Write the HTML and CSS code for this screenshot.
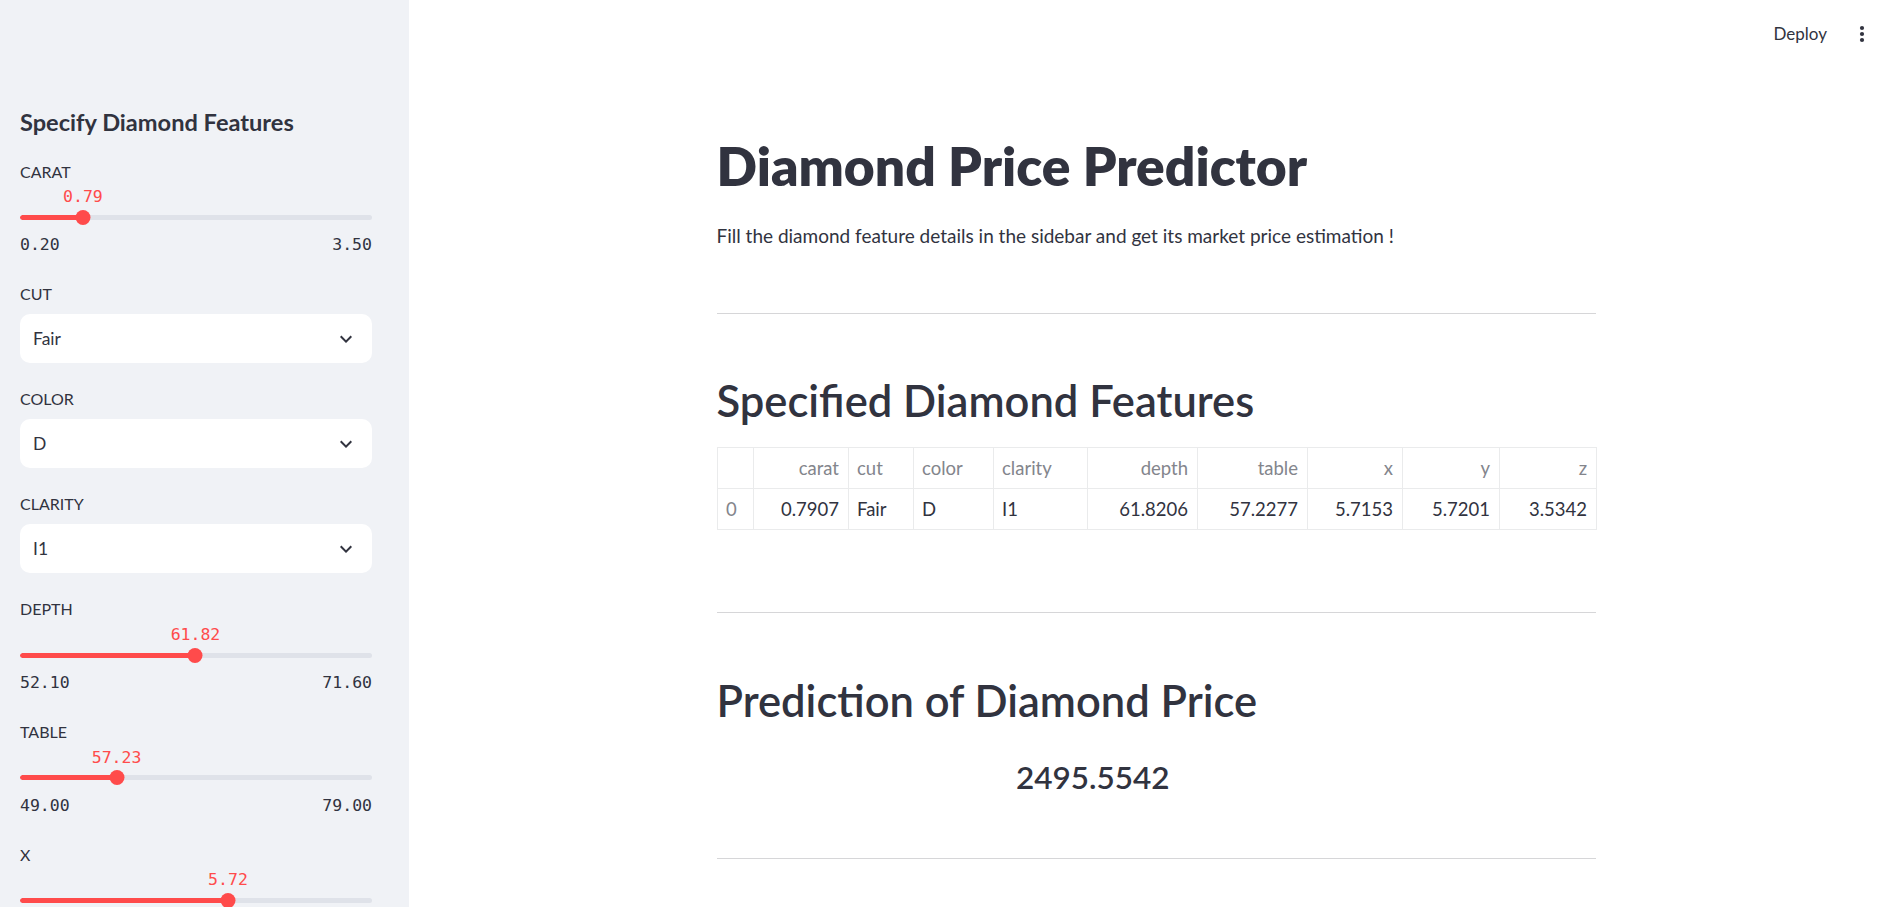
FILE: index.html
```html
<!DOCTYPE html>
<html lang="en">
<head>
<meta charset="utf-8">
<title>Diamond Price Predictor</title>
<link rel="stylesheet" href="styles.css">
</head>
<body>
<div class="app">
  <aside class="sidebar">
    <h2 class="sidebar-title">Specify Diamond Features</h2>
    <div class="widgets">
      <div class="slider">
        <div class="label">CARAT</div>
        <div class="slider-rail">
          <div class="track"><div class="track-fill" style="width:17.88%"></div></div>
          <div class="thumb" style="left:17.88%"></div>
          <div class="thumb-value" style="left:17.88%">0.79</div>
        </div>
        <div class="minmax"><span>0.20</span><span>3.50</span></div>
      </div>

      <div class="select-widget">
        <div class="label">CUT</div>
        <div class="select"><span>Fair</span>
          <svg class="chev" viewBox="0 0 24 24" width="24" height="24"><path d="M7.41 8.59L12 13.17l4.59-4.58L18 10l-6 6-6-6 1.41-1.41z"/></svg>
        </div>
      </div>

      <div class="select-widget">
        <div class="label">COLOR</div>
        <div class="select"><span>D</span>
          <svg class="chev" viewBox="0 0 24 24" width="24" height="24"><path d="M7.41 8.59L12 13.17l4.59-4.58L18 10l-6 6-6-6 1.41-1.41z"/></svg>
        </div>
      </div>

      <div class="select-widget">
        <div class="label">CLARITY</div>
        <div class="select"><span>I1</span>
          <svg class="chev" viewBox="0 0 24 24" width="24" height="24"><path d="M7.41 8.59L12 13.17l4.59-4.58L18 10l-6 6-6-6 1.41-1.41z"/></svg>
        </div>
      </div>

      <div class="slider">
        <div class="label">DEPTH</div>
        <div class="slider-rail">
          <div class="track"><div class="track-fill" style="width:49.85%"></div></div>
          <div class="thumb" style="left:49.85%"></div>
          <div class="thumb-value" style="left:49.85%">61.82</div>
        </div>
        <div class="minmax"><span>52.10</span><span>71.60</span></div>
      </div>

      <div class="slider">
        <div class="label">TABLE</div>
        <div class="slider-rail">
          <div class="track"><div class="track-fill" style="width:27.43%"></div></div>
          <div class="thumb" style="left:27.43%"></div>
          <div class="thumb-value" style="left:27.43%">57.23</div>
        </div>
        <div class="minmax"><span>49.00</span><span>79.00</span></div>
      </div>

      <div class="slider">
        <div class="label">X</div>
        <div class="slider-rail">
          <div class="track"><div class="track-fill" style="width:59.09%"></div></div>
          <div class="thumb" style="left:59.09%"></div>
          <div class="thumb-value" style="left:59.09%">5.72</div>
        </div>
      </div>
    </div>
  </aside>

  <main class="main">
    <header class="topbar">
      <span class="deploy">Deploy</span>
      <svg class="kebab" viewBox="0 0 24 24" width="24" height="24"><circle cx="12" cy="6" r="2.1"/><circle cx="12" cy="12" r="2.1"/><circle cx="12" cy="18" r="2.1"/></svg>
    </header>

    <div class="content">
      <h1 class="title">Diamond Price Predictor</h1>
      <p class="subtitle">Fill the diamond feature details in the sidebar and get its market price estimation !</p>
      <hr class="divider divider-first">

      <h2 class="section">Specified Diamond Features</h2>
      <table class="features">
        <colgroup>
          <col class="c-idx"><col class="c-carat"><col class="c-cut"><col class="c-color"><col class="c-clarity">
          <col class="c-depth"><col class="c-table"><col class="c-x"><col class="c-y"><col class="c-z">
        </colgroup>
        <thead>
          <tr>
            <th class="left"></th>
            <th class="right">carat</th>
            <th class="left">cut</th>
            <th class="left">color</th>
            <th class="left">clarity</th>
            <th class="right">depth</th>
            <th class="right">table</th>
            <th class="right">x</th>
            <th class="right">y</th>
            <th class="right">z</th>
          </tr>
        </thead>
        <tbody>
          <tr>
            <th class="left">0</th>
            <td class="right">0.7907</td>
            <td class="left">Fair</td>
            <td class="left">D</td>
            <td class="left">I1</td>
            <td class="right">61.8206</td>
            <td class="right">57.2277</td>
            <td class="right">5.7153</td>
            <td class="right">5.7201</td>
            <td class="right">3.5342</td>
          </tr>
        </tbody>
      </table>
      <hr class="divider divider-table">

      <h2 class="section">Prediction of Diamond Price</h2>
      <div class="prediction">
        <div></div>
        <div class="price">2495.5542</div>
        <div></div>
      </div>
      <hr class="divider divider-price">
    </div>
  </main>
</div>
</body>
</html>
```
FILE: styles.css
```css
* { box-sizing: border-box; }

html, body {
  margin: 0;
  padding: 0;
  height: 100%;
}

body {
  font-family: Lato, "Noto Sans", sans-serif;
  color: #31333f;
  background: #ffffff;
  overflow: hidden;
}

.app {
  display: flex;
  height: 907px;
}

/* ---------- Sidebar ---------- */
.sidebar {
  flex: 0 0 409px;
  background: #f0f2f6;
  padding: 109px 37px 0 20px;
  overflow: hidden;
  display: flex;
  flex-direction: column;
}

.sidebar-title {
  margin: 0 0 26.5px;
  font-size: 23.6px;
  font-weight: 700;
  line-height: 26px;
}

.widgets {
  display: flex;
  flex-direction: column;
  gap: 26px;
}

.label {
  font-size: 16px;
  line-height: 20px;
  color: #31333f;
}

.slider {
  padding-bottom: 3px;
  flex: none;
}

.slider-rail {
  position: relative;
  padding-top: 33.3px;
  padding-bottom: 5px;
}

.track {
  height: 5px;
  border-radius: 3px;
  background: #dfe2e9;
  overflow: hidden;
}

.track-fill {
  height: 100%;
  background: #ff4b4b;
  border-radius: 3px;
}

.thumb {
  position: absolute;
  top: 28.3px;
  width: 15px;
  height: 15px;
  border-radius: 50%;
  background: #ff4b4b;
  transform: translateX(-50%);
}

.thumb-value {
  position: absolute;
  top: 5.5px;
  font-family: "DejaVu Sans Mono", "Liberation Mono", monospace;
  font-size: 16.5px;
  line-height: 20px;
  color: #ff4b4b;
  transform: translateX(-50%);
  white-space: nowrap;
}

.minmax {
  margin-top: 10.5px;
  display: flex;
  justify-content: space-between;
  font-family: "DejaVu Sans Mono", "Liberation Mono", monospace;
  font-size: 16.5px;
  line-height: 20px;
  color: #31333f;
}

.select-widget {
  flex: none;
}

.select {
  margin-top: 9.5px;
  height: 49.5px;
  background: #ffffff;
  border-radius: 10px;
  display: flex;
  align-items: center;
  justify-content: space-between;
  padding: 0 14px 0 13px;
  font-size: 17.5px;
}

.chev {
  fill: #31333f;
  display: block;
}

/* ---------- Main ---------- */
.main {
  flex: 1;
  min-width: 0;
  display: flex;
  flex-direction: column;
}

.topbar {
  height: 68px;
  flex: none;
  display: flex;
  justify-content: flex-end;
  align-items: center;
  gap: 23px;
  padding-right: 29px;
}

.deploy {
  font-size: 17px;
  line-height: 20px;
  color: #31333f;
}

.kebab {
  fill: #31333f;
  display: block;
}

.content {
  width: 879px;
  margin: 0 auto;
  padding-top: 65.4px;
}

.title {
  margin: 0;
  font-size: 53.3px;
  font-weight: 800;
  line-height: 64.8px;
}

.subtitle {
  margin: 23px 0 0;
  font-size: 19px;
  line-height: 29.8px;
}

.divider {
  border: none;
  border-top: 1px solid #d6d6d8;
  margin: 0;
  height: 0;
}

.divider-first { margin-top: 61.7px; }
.divider-table { margin-top: 81.7px; }
.divider-price { margin-top: 61.7px; }

.section {
  margin: 60.7px 0 0;
  font-size: 43.5px;
  font-weight: 600;
  line-height: 52.2px;
}

.features {
  margin-top: 20.7px;
  width: 879px;
  border-collapse: collapse;
  table-layout: fixed;
  font-size: 18.5px;
}

.c-idx { width: 36px; }
.c-carat { width: 95px; }
.c-cut { width: 65px; }
.c-color { width: 80px; }
.c-clarity { width: 94px; }
.c-depth { width: 110px; }
.c-table { width: 110px; }
.c-x { width: 95px; }
.c-y { width: 97px; }
.c-z { width: 97px; }

.features th,
.features td {
  height: 41px;
  padding: 0 8.5px;
  border: 1px solid #eaebec;
  font-weight: 400;
  white-space: nowrap;
}

.features th {
  color: #83858c;
}

.features td {
  color: #31333f;
}

.features .left { text-align: left; }
.features .right { text-align: right; }

.prediction {
  margin-top: 32.9px;
  display: grid;
  grid-template-columns: 1fr 1fr 1fr;
  column-gap: 19.4px;
}

.price {
  font-size: 31.5px;
  font-weight: 600;
  line-height: 37.8px;
}
```
